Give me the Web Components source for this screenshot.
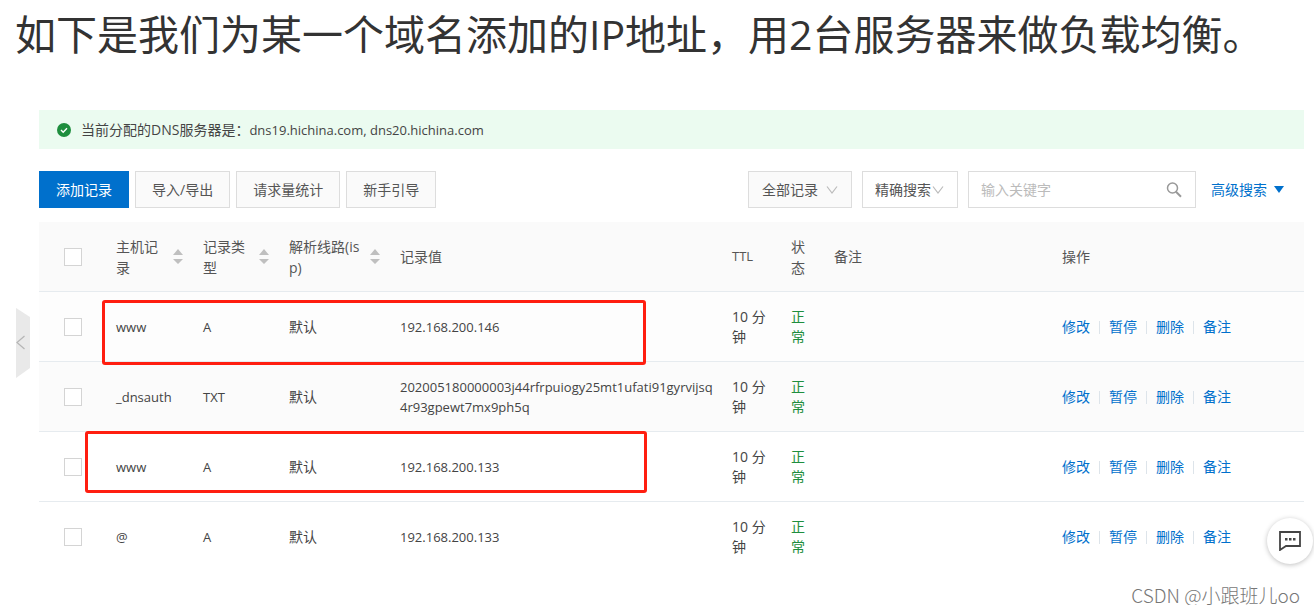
<!DOCTYPE html>
<html lang="zh-CN">
<head>
<meta charset="utf-8">
<title>DNS 解析记录</title>
<style>
  body { margin: 0; background: #fff; color: #555; font: 14px/21px "Open Sans", "Noto Sans CJK SC", sans-serif; }
</style>
</head>
<body>
<dns-page>
  <page-title>如下是我们为某一个域名添加的IP地址，用2台服务器来做负载均衡。</page-title>
  <dns-notice>当前分配的DNS服务器是：<span slot="hosts">dns19.hichina.com, dns20.hichina.com</span></dns-notice>
  <record-toolbar></record-toolbar>
  <record-table></record-table>
  <side-handle slot="float"></side-handle>
  <chat-button slot="float"></chat-button>
  <author-mark>CSDN @小跟班儿oo</author-mark>
</dns-page>
<script>
function define(name, html, setup) {
  const template = document.createElement('template');
  template.innerHTML = html;
  customElements.define(name, class extends HTMLElement {
    constructor() {
      super();
      this.attachShadow({ mode: 'open' }).append(template.content.cloneNode(true));
      if (setup) setup(this.shadowRoot);
    }
  });
}

define('dns-page', `
<style>
  :host { display: block; position: relative; }
  main { display: flex; flex-direction: column; padding: 0 10px 0 39px; }
</style>
<main><slot></slot></main><slot name="float"></slot>`);

define('page-title', `
<style>
  :host { display: block; margin: 0 0 42px -24px; }
  h1 { margin: 0; font-size: 41px; line-height: 68px; font-weight: 400; color: #333; }
</style>
<h1><slot></slot></h1>`);

define('dns-notice', `
<style>
  :host { display: flex; align-items: center; height: 39px; padding-left: 18px; background: #ebfbf0; color: #444; }
  svg { margin-right: 10px; }
  ::slotted(span) { font-size: 13px; }
</style>
<svg width="14" height="14" viewBox="0 0 14 14"><circle cx="7" cy="7" r="7" fill="#1e8e3e"/><path d="M4 7l2.2 2.2L10 5.2" fill="none" stroke="#fff" stroke-width="1.4"/></svg>
<div><slot></slot><slot name="hosts"></slot></div>`);

define('record-toolbar', `
<style>
  :host { display: flex; justify-content: space-between; margin: 22px 0 14px; }
  div { display: flex; align-items: center; }
  .left { gap: 6px; }
  .right { gap: 10px; padding-right: 20px; }
  button, select, input { box-sizing: border-box; height: 37px; border: 1px solid #ddd; border-radius: 0; font: inherit; color: #555; margin: 0; }
  button { padding: 0 16px; background: #fafafa; }
  button.primary { background: #0070cc; border-color: #0070cc; color: #fff; }
  label { position: relative; display: block; }
  select { appearance: none; background: #fff; padding: 0 12px; width: 96px; }
  select.wide { width: 104px; padding: 0 13px; background: #fafafa; }
  input { width: 228px; padding: 0 40px 0 12px; background: #fff; }
  input::placeholder { color: #bbb; }
  label svg { position: absolute; top: 50%; right: 14px; transform: translateY(-50%); pointer-events: none; }
  a { display: flex; align-items: center; gap: 7px; margin-left: 5px; color: #0070cc; text-decoration: none; }
</style>
<div class="left">
  <button class="primary">添加记录</button><button>导入/导出</button><button>请求量统计</button><button>新手引导</button>
</div>
<div class="right">
  <label><select class="wide" aria-label="记录范围"><option>全部记录</option></select>
    <svg width="12" height="8" viewBox="0 0 12 8"><path d="M1 .5l5 6.500l5-6.500" fill="none" stroke="#bbb" stroke-width="1.200"/></svg></label>
  <label><select aria-label="搜索方式"><option>精确搜索</option></select>
    <svg width="12" height="8" viewBox="0 0 12 8"><path d="M1 .5l5 6.500l5-6.500" fill="none" stroke="#bbb" stroke-width="1.200"/></svg></label>
  <label><input type="text" aria-label="关键字" placeholder="输入关键字">
    <svg width="16" height="16" viewBox="0 0 16 16" fill="none" stroke="#999" stroke-width="1.500"><circle cx="6.500" cy="6" r="5"/><path d="M10 9.700l5 5" stroke-width="2"/></svg></label>
  <a href="#">高级搜索<svg width="10" height="7" viewBox="0 0 10 7"><path d="M0 0h10L5 7z" fill="#0070cc"/></svg></a>
</div>`);

define('sort-icon', `
<style>:host { display: block; flex: none; width: 10px; height: 16px; } svg { display: block; }</style>
<svg width="10" height="16" viewBox="0 0 10 16" fill="#bfbfbf"><path d="M5 0l5 6H0zM0 10h10l-5 5z"/></svg>`);

define('row-actions', `
<style>
  :host { display: flex; align-items: center; }
  a { color: #0070cc; text-decoration: none; }
  a + a::before { content: ""; display: inline-block; width: 1px; height: 13px; margin: 0 9px; background: #dde4ea; vertical-align: -2px; }
</style>
<a href="#">修改</a><a href="#">暂停</a><a href="#">删除</a><a href="#">备注</a>`);

define('record-table', `
<style>
  :host { display: block; position: relative; }
  table { width: 100%; table-layout: fixed; border-collapse: separate; border-spacing: 0; }
  th, td { box-sizing: border-box; height: 70px; padding: 0 9px 0 11px; border-bottom: 1px solid #e6ebef; text-align: left; vertical-align: middle; font-weight: 400; word-break: break-all; }
  tr:last-child td { border-bottom: 0; }
  thead { background: #fafafa; color: #555; }
  tbody { color: #444; line-height: 20px; }
  tbody tr:nth-child(1) { background: #fdfdfd; }
  tbody tr:nth-child(2) { background: #fbfbfb; }
  tr > :first-child { padding-left: 25px; }
  .latin { font-size: 13px; }
  .value { padding-right: 4px; }
  .ok { color: #1e8e3e; }
  .sortable { display: flex; align-items: center; justify-content: space-between; gap: 5px; }
  input { appearance: none; display: block; box-sizing: border-box; width: 18px; height: 18px; margin: 0; border: 1px solid #d4d4d4; background: #fff; }
  .mark { position: absolute; box-sizing: border-box; border: 3px solid #ff1e10; border-radius: 3px; pointer-events: none; }
  .first { left: 63px; top: 78px; width: 544px; height: 65px; }
  .second { left: 46px; top: 209px; width: 562px; height: 62px; }
</style>
<table>
  <colgroup><col style="width:66px"><col style="width:87px"><col style="width:86px"><col style="width:111px"><col style="width:332px"><col style="width:59px"><col style="width:43px"><col style="width:228px"><col></colgroup>
  <thead><tr>
    <th><input type="checkbox" aria-label="全选"></th>
    <th><div class="sortable">主机记录<sort-icon></sort-icon></div></th>
    <th><div class="sortable">记录类型<sort-icon></sort-icon></div></th>
    <th><div class="sortable">解析线路(isp)<sort-icon></sort-icon></div></th>
    <th>记录值</th><th class="latin">TTL</th><th>状态</th><th>备注</th><th>操作</th>
  </tr></thead>
  <tbody></tbody>
</table>
<div class="mark first"></div><div class="mark second"></div>`, root => {
  const records = [
    ['www', 'A', '192.168.200.146'],
    ['_dnsauth', 'TXT', '202005180000003j44rfrpuiogy25mt1ufati91gyrvijsq4r93gpewt7mx9ph5q'],
    ['www', 'A', '192.168.200.133'],
    ['@', 'A', '192.168.200.133'],
  ];
  root.querySelector('tbody').innerHTML = records.map(([host, type, value]) => `<tr>
    <td><input type="checkbox" aria-label="选择 ${host}"></td>
    <td class="latin">${host}</td><td class="latin">${type}</td><td>默认</td>
    <td class="latin value">${value}</td><td>10 分钟</td>
    <td class="ok">正常</td><td></td><td><row-actions></row-actions></td></tr>`).join('');
});

define('side-handle', `
<style>
  :host { position: absolute; left: 16px; top: 308px; }
  button { display: block; padding: 0; border: 0; background: none; }
  svg { display: block; }
</style>
<button aria-label="收起"><svg width="14" height="70" viewBox="0 0 14 70"><path d="M0 0l14 9v51L0 70z" fill="#e9e9e9"/><path d="M8.500 28L1 34.500 8.500 41" fill="none" stroke="#b5b5b5" stroke-width="1.200"/></svg></button>`);

define('chat-button', `
<style>
  :host { position: absolute; right: 1px; top: 518px; }
  button { display: grid; place-items: center; width: 46px; height: 46px; padding: 0; border: 0; border-radius: 50%; background: #fff; box-shadow: 0 1px 5px rgba(0,0,0,.25); }
</style>
<button aria-label="咨询"><svg width="22" height="20" viewBox="0 0 22 20"><path d="M1 1h20v14H7L1 19z" fill="none" stroke="#444" stroke-width="1.800"/><path d="M6 7h2.500v2.500H6zM10 7h2.500v2.500H10zM14 7h2.500v2.500H14z" fill="#444"/></svg></button>`);

define('author-mark', `
<style>
  :host { display: block; margin-top: 12px; padding-right: 4px; text-align: right; font: 300 19px/21px "Noto Sans CJK SC", sans-serif; color: #777; }
</style>
<slot></slot>`);
</script>
</body>
</html>
